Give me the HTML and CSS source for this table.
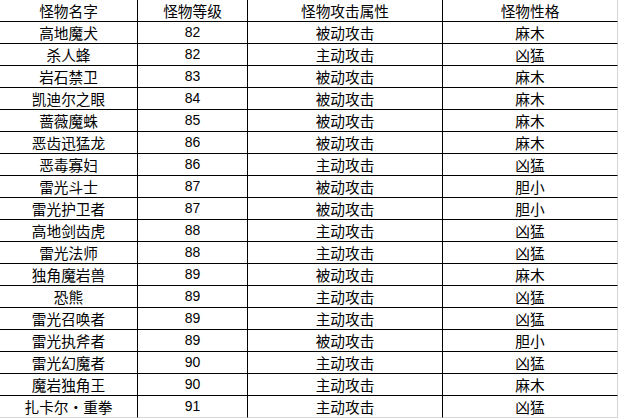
FILE: index.html
```html
<!DOCTYPE html>
<html lang="zh-CN">
<head>
<meta charset="utf-8">
<title>怪物列表</title>
<link rel="stylesheet" href="styles.css">
</head>
<body>
<div class="sheet">
  <div class="cell">怪物名字</div><div class="cell">怪物等级</div><div class="cell">怪物攻击属性</div><div class="cell">怪物性格</div>
  <div class="cell">高地魔犬</div><div class="cell num">82</div><div class="cell">被动攻击</div><div class="cell">麻木</div>
  <div class="cell">杀人蜂</div><div class="cell num">82</div><div class="cell">主动攻击</div><div class="cell">凶猛</div>
  <div class="cell">岩石禁卫</div><div class="cell num">83</div><div class="cell">被动攻击</div><div class="cell">麻木</div>
  <div class="cell">凯迪尔之眼</div><div class="cell num">84</div><div class="cell">被动攻击</div><div class="cell">麻木</div>
  <div class="cell">蔷薇魔蛛</div><div class="cell num">85</div><div class="cell">被动攻击</div><div class="cell">麻木</div>
  <div class="cell">恶齿迅猛龙</div><div class="cell num">86</div><div class="cell">被动攻击</div><div class="cell">麻木</div>
  <div class="cell">恶毒寡妇</div><div class="cell num">86</div><div class="cell">主动攻击</div><div class="cell">凶猛</div>
  <div class="cell">雷光斗士</div><div class="cell num">87</div><div class="cell">被动攻击</div><div class="cell">胆小</div>
  <div class="cell">雷光护卫者</div><div class="cell num">87</div><div class="cell">被动攻击</div><div class="cell">胆小</div>
  <div class="cell">高地剑齿虎</div><div class="cell num">88</div><div class="cell">主动攻击</div><div class="cell">凶猛</div>
  <div class="cell">雷光法师</div><div class="cell num">88</div><div class="cell">主动攻击</div><div class="cell">凶猛</div>
  <div class="cell">独角魔岩兽</div><div class="cell num">89</div><div class="cell">被动攻击</div><div class="cell">麻木</div>
  <div class="cell">恐熊</div><div class="cell num">89</div><div class="cell">主动攻击</div><div class="cell">凶猛</div>
  <div class="cell">雷光召唤者</div><div class="cell num">89</div><div class="cell">主动攻击</div><div class="cell">凶猛</div>
  <div class="cell">雷光执斧者</div><div class="cell num">89</div><div class="cell">被动攻击</div><div class="cell">胆小</div>
  <div class="cell">雷光幻魔者</div><div class="cell num">90</div><div class="cell">主动攻击</div><div class="cell">凶猛</div>
  <div class="cell">魔岩独角王</div><div class="cell num">90</div><div class="cell">主动攻击</div><div class="cell">麻木</div>
  <div class="cell last">扎卡尔<span class="dot">•</span>重拳</div><div class="cell num last">91</div><div class="cell last">主动攻击</div><div class="cell last">凶猛</div>
</div>
</body>
</html>
```

FILE: styles.css
```css
html, body {
  margin: 0;
  padding: 0;
  background: #ffffff;
}

.sheet {
  display: grid;
  grid-template-columns: 138px 110px 195px 175px;
  grid-auto-rows: 22px;
  width: 618px;
  font-family: "Noto Sans CJK SC", sans-serif;
  font-size: 14.67px;
  color: #000000;
}

.cell {
  box-sizing: border-box;
  border-right: 1px solid #000000;
  border-bottom: 1px solid #000000;
  display: flex;
  align-items: center;
  justify-content: center;
  line-height: 21px;
  white-space: nowrap;
  overflow: hidden;
}

.cell:nth-child(4n) {
  border-right-color: #d4d4d4;
}

.cell.last {
  border-bottom-color: #d4d4d4;
}

.num {
  font-family: "Liberation Sans", sans-serif;
  font-size: 14px;
}

.dot {
  display: inline-block;
  width: 1em;
  text-align: center;
}
```
